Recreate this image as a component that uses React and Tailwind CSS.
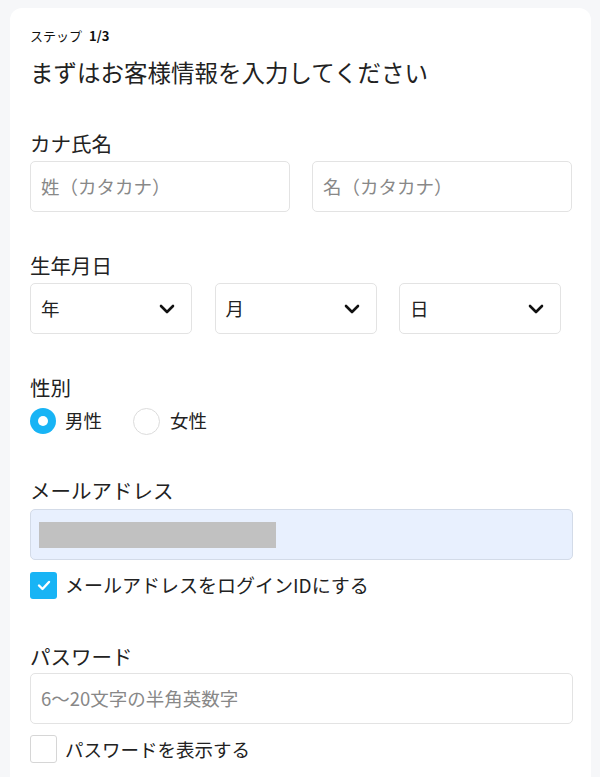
import React from "react";

const font = { fontFamily: '"Noto Sans CJK JP", "Noto Sans", sans-serif' };

function Chevron() {
  return (
    <svg width="16" height="10" viewBox="0 0 16 10" fill="none">
      <path d="M2 2l6 6 6-6" stroke="#111" strokeWidth="2.6" strokeLinecap="round" strokeLinejoin="round" />
    </svg>
  );
}

function Select({ label }) {
  return (
    <div className="w-[162px] h-[51px] border border-[#e3e3e3] rounded-[5px] flex items-center justify-between pl-[10px] pr-[16px] text-[18.5px] text-[#222]">
      <span>{label}</span>
      <Chevron />
    </div>
  );
}

export default function App() {
  return (
    <div className="min-h-screen bg-[#f6f7f9] pt-[8px] pl-[10px]" style={font}>
      <div className="w-[581px] bg-white rounded-t-[12px] px-[20px] pt-[18px] pb-[40px] text-[#222]">
        <div className="h-[20px] flex items-center text-[13px] text-[#111]">
          <span>ステップ</span>
          <span className="font-bold ml-[7px]">1/3</span>
        </div>
        <div className="mt-[9px] text-[23.5px] leading-[34px] text-[#222]">まずはお客様情報を入力してください</div>

        <div className="mt-[39px] text-[20.5px] leading-[30px]">カナ氏名</div>
        <div className="mt-[3px] flex gap-[22px] w-[542px]">
          <div className="flex-1 h-[51px] border border-[#e3e3e3] rounded-[5px] flex items-center pl-[10px] text-[18.5px] text-[#888]">姓（カタカナ）</div>
          <div className="flex-1 h-[51px] border border-[#e3e3e3] rounded-[5px] flex items-center pl-[10px] text-[18.5px] text-[#888]">名（カタカナ）</div>
        </div>

        <div className="mt-[38px] text-[20.5px] leading-[30px]">生年月日</div>
        <div className="mt-[3px] flex gap-[22.5px]">
          <Select label="年" />
          <Select label="月" />
          <Select label="日" />
        </div>

        <div className="mt-[38px] text-[20.5px] leading-[30px]">性別</div>
        <div className="mt-[6px] flex items-center h-[26px]">
          <div className="w-[26px] h-[26px] rounded-full bg-[#18b4f5] flex items-center justify-center">
            <div className="w-[10px] h-[10px] rounded-full bg-white" />
          </div>
          <span className="ml-[9px] text-[18.5px]">男性</span>
          <div className="ml-[31px] w-[27px] h-[27px] rounded-full border-[1.5px] border-[#dcdcdc] bg-white" />
          <span className="ml-[10px] text-[18.5px]">女性</span>
        </div>

        <div className="mt-[41px] text-[20.5px] leading-[30px]">メールアドレス</div>
        <div className="mt-[4px] w-[543px] h-[51px] bg-[#e8f0fe] border border-[#d3dbe8] rounded-[5px] flex items-center pl-[8px]">
          <div className="w-[237px] h-[26px] bg-[#c1c1c1]" />
        </div>
        <div className="mt-[11px] flex items-center">
          <div className="w-[27px] h-[27px] rounded-[3px] bg-[#18b4f5] flex items-center justify-center">
            <svg width="14" height="11" viewBox="0 0 14 11" fill="none">
              <path d="M2 5.5l3.5 3.5L12 2" stroke="#fff" strokeWidth="2.4" strokeLinecap="round" strokeLinejoin="round" />
            </svg>
          </div>
          <span className="ml-[8px] text-[19px] leading-[28px]">メールアドレスをログインIDにする</span>
        </div>

        <div className="mt-[42px] text-[20.5px] leading-[30px]">パスワード</div>
        <div className="mt-[2px] w-[543px] h-[51px] border border-[#e3e3e3] rounded-[5px] flex items-center pl-[10px] text-[18.5px] text-[#888]">6〜20文字の半角英数字</div>
        <div className="mt-[11px] flex items-center">
          <div className="w-[27px] h-[28px] rounded-[3px] border border-[#d6d6d6] bg-white" />
          <span className="ml-[8px] text-[18.5px] leading-[28px]">パスワードを表示する</span>
        </div>
      </div>
    </div>
  );
}
